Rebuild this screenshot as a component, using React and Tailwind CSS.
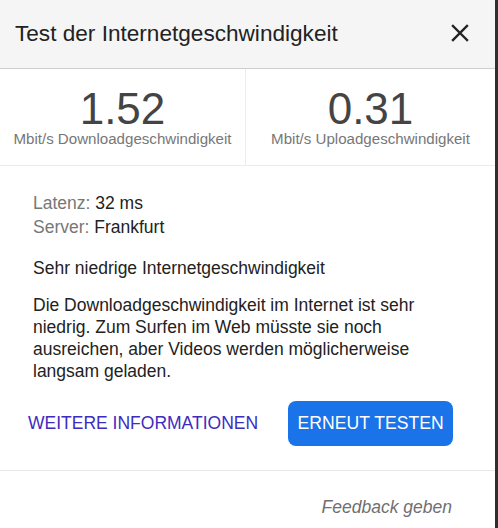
import React from "react";

export default function App() {
  const font = { fontFamily: '"Liberation Sans", Arial, sans-serif' };
  return (
    <div className="flex h-[528px] w-[498px] overflow-hidden bg-white" style={font}>
      <div className="flex w-[495px] flex-col">
        <div className="flex h-[69px] items-center justify-between border-b border-[#cfcfcf] bg-[#f5f5f5] pl-[15px] pr-[26px]">
          <span className="text-[22.6px] leading-[28px] text-[#222]">Test der Internetgeschwindigkeit</span>
          <svg width="18" height="18" viewBox="0 0 18 18" className="mt-[-2px]">
            <path d="M2 2 L16 16 M16 2 L2 16" stroke="#222" strokeWidth="2.4" strokeLinecap="square" />
          </svg>
        </div>
        <div className="flex h-[97px] border-b border-[#ececec]">
          <div className="flex w-[246px] flex-col items-center border-r border-[#ececec] pt-[18px]">
            <span className="text-[44px] leading-[44px] text-[#444]">1.52</span>
            <span className="mt-[-2px] text-[15.1px] leading-5 text-[#777]">Mbit/s Downloadgeschwindigkeit</span>
          </div>
          <div className="flex flex-1 flex-col items-center pt-[18px]">
            <span className="text-[44px] leading-[44px] text-[#444]">0.31</span>
            <span className="mt-[-2px] text-[15.1px] leading-5 text-[#777]">Mbit/s Uploadgeschwindigkeit</span>
          </div>
        </div>
        <div className="flex flex-col px-[33px] pt-[25px] text-[17.5px] text-[#222]">
          <div className="leading-6"><span className="text-[#777]">Latenz:</span> 32 ms</div>
          <div className="leading-6"><span className="text-[#777]">Server:</span> Frankfurt</div>
          <div className="mt-[17px] leading-6">Sehr niedrige Internetgeschwindigkeit</div>
          <p className="mt-[14px] w-[425px] leading-[22px]">
            Die Downloadgeschwindigkeit im Internet ist sehr niedrig. Zum Surfen im Web müsste sie noch ausreichen, aber Videos werden möglicherweise langsam geladen.
          </p>
        </div>
        <div className="mt-[19px] flex items-center gap-[30px] pl-[28px]">
          <span className="text-[17.5px] text-[#3d2dbf]">WEITERE INFORMATIONEN</span>
          <button className="h-[45px] w-[165px] rounded-[8px] bg-[#1a73e8] text-[17.6px] text-white">ERNEUT TESTEN</button>
        </div>
        <div className="mt-[24px] border-t border-[#e8e8e8]"></div>
        <div className="flex justify-end pr-[43px] pt-[24px]">
          <span className="text-[17.5px] italic leading-6 text-[#6f6f6f]">Feedback geben</span>
        </div>
      </div>
      <div className="h-full w-[3px] bg-[#2f2f2f]"></div>
    </div>
  );
}
